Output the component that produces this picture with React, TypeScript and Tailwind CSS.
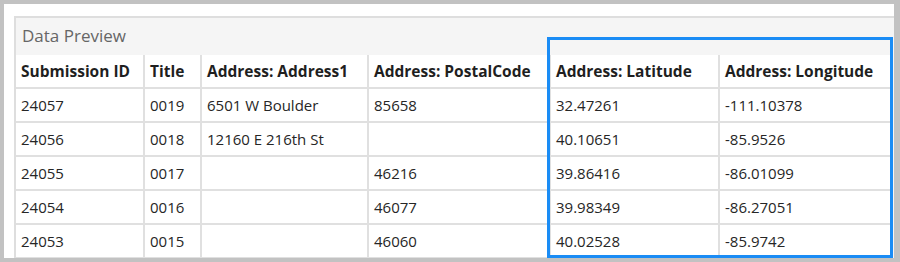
const columns = [
  { label: 'Submission ID', width: 'w-[128px]' },
  { label: 'Title', width: 'w-[57px]' },
  { label: 'Address: Address1', width: 'w-[167px]' },
  { label: 'Address: PostalCode', width: 'w-[182px]' },
  { label: 'Address: Latitude', width: 'w-[169px]' },
  { label: 'Address: Longitude', width: 'w-[173px]' },
];

const rows = [
  ['24057', '0019', '6501 W Boulder', '85658', '32.47261', '-111.10378'],
  ['24056', '0018', '12160 E 216th St', '', '40.10651', '-85.9526'],
  ['24055', '0017', '', '46216', '39.86416', '-86.01099'],
  ['24054', '0016', '', '46077', '39.98349', '-86.27051'],
  ['24053', '0015', '', '46060', '40.02528', '-85.9742'],
];

export default function App() {
  return (
    <div
      className="w-[900px] h-[262px] bg-[#c2c2c2] pt-[4px] pl-[4px] pr-[6px] pb-[4px]"
      style={{ fontFamily: '"Open Sans", Lato, sans-serif' }}
    >
      <div className="relative h-full bg-white pt-[12px] pl-[10px]">
        {/* Preview panel */}
        <div className="h-full border-l-2 border-t-2 border-[#dedede] bg-[#f5f5f5] overflow-hidden">
          <div className="h-[37px] flex items-center pl-[6px] pb-[2px] text-[17px] text-[#666]">Data Preview</div>
          <table className="table-fixed border-collapse bg-white text-[15px] text-[#262626]">
            <thead>
              <tr className="h-[33px]">
                {columns.map((c, i) => (
                  <th
                    key={c.label}
                    className={`${c.width} text-left font-bold pl-[5px] pt-[2px] text-[15.5px] text-[#1f1f1f] border-b-2 border-[#e0e0e0] ${
                      i > 0 ? 'border-l-2' : ''
                    }`}
                  >
                    {c.label}
                  </th>
                ))}
              </tr>
            </thead>
            <tbody>
              {rows.map((r) => (
                <tr key={r[0]} className="h-[34px]">
                  {r.map((v, i) => (
                    <td
                      key={i}
                      className={`pl-[5px] border-b-2 border-[#e0e0e0] ${i > 0 ? 'border-l-2' : ''}`}
                    >
                      {v}
                    </td>
                  ))}
                </tr>
              ))}
            </tbody>
          </table>
        </div>

        {/* Highlight around the coordinate columns */}
        <div className="absolute left-[543px] top-[33px] w-[346px] h-[221px] border-[3px] border-[#1a8cf5]" />
      </div>
    </div>
  );
}
